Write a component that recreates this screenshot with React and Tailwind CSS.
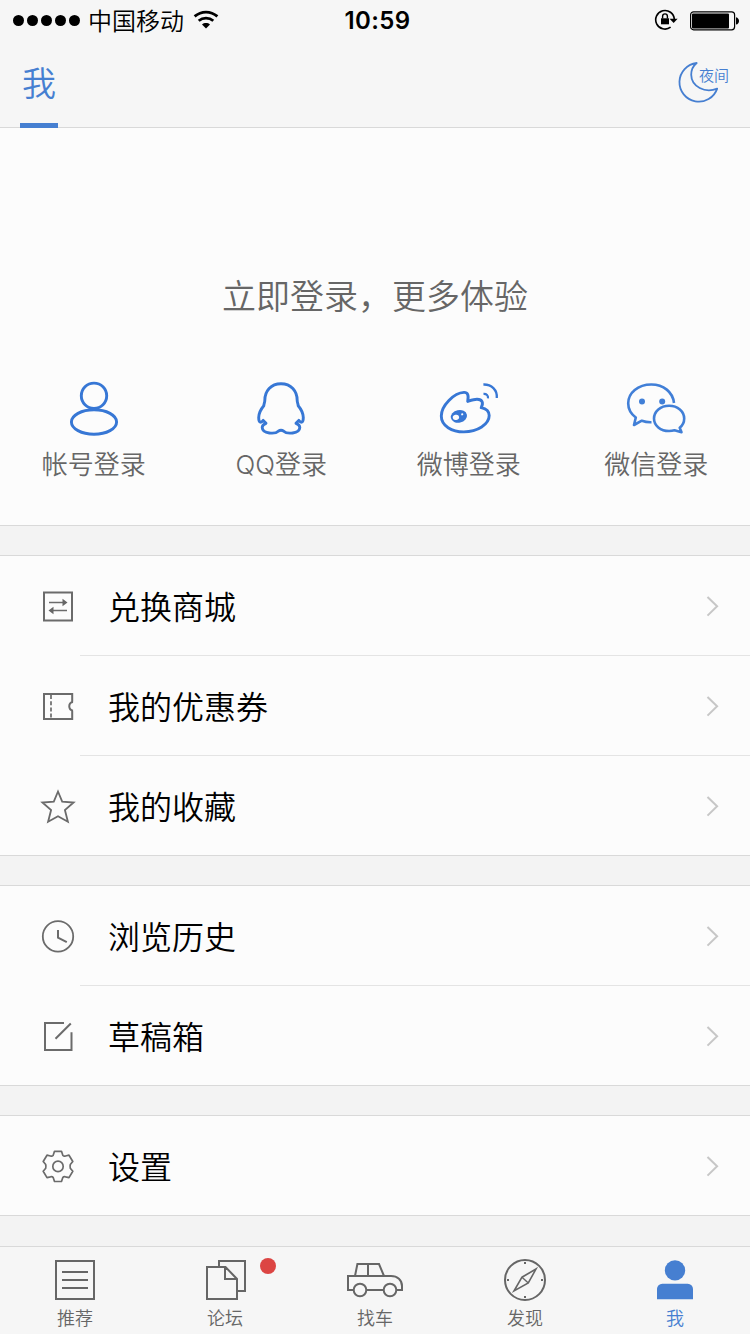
const StatusBar = () => (
  <div className="grid grid-cols-3 items-center h-10 text-black">
    <div className="flex items-center pl-[13px]">
      <div className="flex gap-[3px]">
        {[0, 1, 2, 3, 4].map((dot) => (
          <span key={dot} className="size-[11px] rounded-full bg-black" />
        ))}
      </div>
      <span className="ml-2 text-[24px] leading-10 whitespace-nowrap">中国移动</span>
      <svg className="ml-2 shrink-0" width="28" height="20" viewBox="0 0 28 20" fill="none" stroke="#000">
        <path d="M2.600 6.400C9.400 .6 18.600 .6 25.400 6.400" strokeWidth="2.800" />
        <path d="M6.700 10.800c4.300-3.700 10.300-3.700 14.600 0" strokeWidth="2.800" />
        <path d="M14 18.500l-4-4.100c2.300-1.900 5.700-1.900 8 0z" fill="#000" stroke="none" />
      </svg>
    </div>
    <div className="pt-0.5 pl-[5px] text-center font-['Inter'] text-[24px] font-semibold leading-[38px] tracking-[0.4px]">
      10:59
    </div>
    <div className="flex items-center justify-end pr-[11px] gap-3">
      <svg width="24" height="22" viewBox="0 0 24 22" fill="none" stroke="#000">
        <path d="M16.600 18.200A9.300 9.300 0 1 1 20.300 10.200" strokeWidth="1.600" />
        <path d="M15.600 9.800h8l-4 4.300z" fill="#000" stroke="none" />
        <rect x="7" y="9.300" width="8" height="6" fill="#000" stroke="none" />
        <path d="M8.600 9.500V7.300a2.400 2.400 0 0 1 4.800 0v2.200" strokeWidth="1.400" />
      </svg>
      <svg className="mt-px" width="49" height="20" viewBox="0 0 49 20">
        <rect x=".6" y=".8" width="44" height="18" rx="3" fill="none" stroke="#000" strokeWidth="1.200" />
        <rect x="2" y="2.400" width="37" height="15" rx="1" />
        <path d="M46 6.200c4 1 4 6.400 0 7.400z" />
      </svg>
    </div>
  </div>
);

const Header = () => (
  <header className="h-32 bg-[#f6f6f6] border-b border-[#d9d9d9]">
    <StatusBar />
    <div className="flex justify-between h-22">
      <div className="flex flex-col justify-between w-[38px] ml-5 text-[34px] text-center text-[#467fd1]">
        <span className="mt-[17px] leading-[50px]">我</span>
        <span className="h-[5px] bg-[#467fd1]" />
      </div>
      <button className="relative mt-5 mr-5 w-[54px] h-11 text-[#467fd1]">
        <svg width="54" height="44" viewBox="0 0 54 44" fill="none" stroke="currentColor" strokeWidth="1.800" strokeLinejoin="round">
          <path d="M20.700 3A19.400 19.400 0 1 0 41.200 28.600C29 33.600 15.400 26.600 15.200 14.800C15.200 10 17 6 20.700 3z" />
        </svg>
        <span className="absolute left-[23px] top-1 text-[15px] leading-[22px] whitespace-nowrap">夜间</span>
      </button>
    </div>
  </header>
);

const LoginIcon = ({ children }) => (
  <svg width="64" height="64" viewBox="0 0 64 64" fill="none" stroke="#3777d5" strokeWidth="2.900" strokeLinejoin="round">
    {children}
  </svg>
);

const logins = [
  {
    label: "帐号登录",
    icon: (
      <>
        <circle cx="32" cy="19.800" r="12.700" />
        <ellipse cx="32" cy="46" rx="22.600" ry="12.200" />
      </>
    ),
  },
  {
    label: "QQ登录",
    icon: (
      <path d="M32 7.800C22 7.800 15.800 15 15.800 24.500C15.800 26.500 14.900 27.500 14.800 29.700C11.300 33.800 9.800 37.500 9.700 41.500C9.700 46.500 11.800 47.600 14.200 44.400L17 47.300C14.500 48.300 13.200 49.500 13.200 51.500C13.500 58.300 26.500 58 29.300 55.200Q32 53.200 34.700 55.200C37.500 58 50.500 58.300 50.800 51.500C50.800 49.500 49.500 48.300 47 47.300L49.800 44.400C52.200 47.600 54.300 46.500 54.300 41.500C54.200 37.500 52.700 33.800 49.200 29.700C49.100 27.500 48.200 26.500 48.200 24.500C48.200 15 42 7.800 32 7.800z" />
    ),
  },
  {
    label: "微博登录",
    icon: (
      <>
        <path d="M30.700 25.400C32 18.500 30.500 16.300 27 16.400C17 16.800 4.300 29.500 4.300 40C4.300 50 15 55.900 26.800 55.900C40.500 55.900 52.200 48.300 52.200 39.600C52.200 35 48.800 32.700 44.200 31.700C46.800 27 45.300 23.200 40 23.200C37 23.200 34 24.300 30.700 25.400z" />
        <path d="M46.400 8.500C54.500 8.200 60.500 14 59.800 22" strokeWidth="2.300" />
        <path d="M46.500 17.800C49.500 17.600 51.400 19.500 51 22.400" strokeWidth="2.200" />
        <g stroke="none" transform="rotate(-12 21.900 40.400)">
          <ellipse cx="21.900" cy="40.400" rx="8.200" ry="6.300" fill="#3777d5" />
          <ellipse cx="18.800" cy="40.700" rx="3.200" ry="2.600" fill="#fcfcfc" />
          <circle cx="25.600" cy="39" r="1.100" fill="#fcfcfc" />
        </g>
      </>
    ),
  },
  {
    label: "微信登录",
    icon: (
      <g stroke="#417fd7" strokeWidth="2.600">
        <path d="M50 27C48.800 16 39.500 8.500 27.300 8.500C14 8.500 4.200 16.800 4.200 27.300C4.200 33.500 7 38 11.800 41.500L10 49L17.800 44.700Q22.500 46.400 27.500 46.200" />
        <path d="M45.100 29.700C36.500 29.700 30 35.300 30 42.500C30 49.600 36.500 55 45.100 55Q48 55 50.500 54.300L57.500 56.200L55.700 51.700C58.700 49.400 60.200 46.200 60.200 42.500C60.200 35.300 53.700 29.700 45.100 29.700z" />
        <circle cx="18" cy="25.400" r="3" fill="#417fd7" stroke="none" />
        <circle cx="38.200" cy="25.400" r="3" fill="#417fd7" stroke="none" />
      </g>
    ),
  },
];

const LoginPanel = () => (
  <section className="h-[398px] bg-[#fcfcfc] border-b border-[#d9d9d9] text-[#666]">
    <h1 className="pt-[142px] text-center text-[34px] leading-[50px] font-[350]">立即登录，更多体验</h1>
    <div className="grid grid-cols-4 mt-14">
      {logins.map(({ label, icon }) => (
        <button key={label} className="flex flex-col items-center">
          <LoginIcon>{icon}</LoginIcon>
          <span className="mt-[5px] font-['Inter','Noto_Sans_CJK_SC',sans-serif] text-[26px] leading-10 font-[350]">
            {label}
          </span>
        </button>
      ))}
    </div>
  </section>
);

const menus = [
  [
    {
      label: "兑换商城",
      icon: (
        <>
          <path d="M6 6.500h28v28H6z" />
          <path d="M11 16.500h14M29 24.500H15" strokeWidth="1.700" />
          <path d="M24.500 12.800l5 3.700-5 3.700zM15.500 20.800l-5 3.700 5 3.700z" fill="#666" stroke="none" />
        </>
      ),
    },
    {
      label: "我的优惠券",
      icon: (
        <>
          <path d="M34.200 15.800V8H6v25h28.200v-8.200M35 16a4.400 4.400 0 0 0 0 8.700" />
          <path d="M13 8v25" strokeDasharray="4 2.200" strokeDashoffset="-1" strokeWidth="1.700" />
        </>
      ),
    },
    {
      label: "我的收藏",
      icon: <path d="M20 5.500L24.200 15.600L35.600 16.500L26.900 24L29.900 35.700L20 30.200L10.100 35.700L13.100 24L4.400 16.500L15.800 15.600z" strokeWidth="1.800" />,
    },
  ],
  [
    {
      label: "浏览历史",
      icon: (
        <>
          <circle cx="20" cy="20.400" r="15.200" strokeWidth="1.800" />
          <path d="M20 14v7.700l8.800 4.500" />
        </>
      ),
    },
    {
      label: "草稿箱",
      icon: <path d="M26 7H7v27h26.500V16.300M17.500 22.800L32.800 7.500" />,
    },
  ],
  [
    {
      label: "设置",
      icon: (
        <g strokeWidth="1.700" strokeLinejoin="round">
          <path d="M16.500 5.300h7l1.400 4.200Q26 10.600 27.500 10L31 9.200L34.800 15.500L32.300 18.500Q31.800 20.400 32.300 22.300L34.800 25.300L31 31.600L27.500 30.800Q26 30.200 24.900 31.300L23.500 35.500h-7L15.100 31.300Q14 30.200 12.500 30.800L9 31.600L5.200 25.300L7.700 22.300Q8.200 20.400 7.700 18.500L5.200 15.500L9 9.200L12.500 10Q14 10.600 15.100 9.500z" />
          <circle cx="20" cy="20.400" r="5.200" />
        </g>
      ),
    },
  ],
];

const MenuRow = ({ label, icon, last }) => (
  <li className="relative flex items-center h-[100px] pl-[38px] pr-[30px]">
    <svg width="40" height="40" viewBox="0 0 40 40" fill="none" stroke="#6b6b6b" strokeWidth="2">
      {icon}
    </svg>
    <span className="flex-1 pl-[30px] pb-[3px] text-[32px] leading-[48px] text-black">{label}</span>
    <svg width="14" height="22" viewBox="0 0 14 22" fill="none" stroke="#c7c7c7" strokeWidth="2">
      <path d="M1.500 2l9.600 9.300-9.600 9.300" />
    </svg>
    {!last && <span className="absolute left-20 right-0 bottom-0 h-px bg-[#e4e4e4]" />}
  </li>
);

const MenuGroup = ({ items }) => (
  <ul className="mt-[29px] bg-[#fcfcfc] border-t border-[#d9d9d9]">
    {items.map((item, i) => (
      <MenuRow key={item.label} {...item} last={i === items.length - 1} />
    ))}
    <li className="-mt-px h-px bg-[#d9d9d9]" />
  </ul>
);

const tabs = [
  {
    label: "推荐",
    icon: <path d="M11 3h38v38H11zM17 14h26M17 22h26M17 30h26" />,
  },
  {
    label: "论坛",
    badge: true,
    icon: (
      <>
        <path d="M24 9V3h26v30h-8" />
        <path d="M30.500 9H12v32h30V21zM30 9v12h12" />
      </>
    ),
  },
  {
    label: "找车",
    icon: (
      <>
        <path d="M8.500 32H3V18h43c6.500 0 11 4 11 10v4h-5M21.500 32h17" />
        <path d="M10 18l2.400-12H34l5 12M23 6v12" />
        <circle cx="15" cy="32" r="6.300" />
        <circle cx="45" cy="32" r="6.300" />
      </>
    ),
  },
  {
    label: "发现",
    icon: (
      <>
        <circle cx="30" cy="22" r="20" />
        <path d="M41 11L27 19.200L19 33L33.300 25z" strokeWidth="1.600" />
        <path d="M27 19.200l6.300 5.800" strokeWidth="1.400" />
        <path d="M29 5h2M29 39h2M12 22h2M46 22h2" />
      </>
    ),
  },
  {
    label: "我",
    active: true,
    icon: (
      <g fill="currentColor" stroke="none">
        <circle cx="30" cy="12.400" r="10.200" />
        <path d="M12 41.300V31a5.300 5.300 0 0 1 5.300-5.300h25.400A5.300 5.300 0 0 1 48 31v10.300z" />
      </g>
    ),
  },
];

const TabBar = () => (
  <nav className="grid grid-cols-5 h-22 mt-[30px] bg-[#f6f6f6] border-t border-[#d9d9d9]">
    {tabs.map(({ label, icon, active, badge }) => (
      <button
        key={label}
        className={`relative flex flex-col items-center pt-[11px] ${active ? "text-[#467fd1]" : "text-[#666]"}`}
      >
        <svg width="60" height="44" viewBox="0 0 60 44" fill="none" stroke="currentColor" strokeWidth="2">
          {icon}
        </svg>
        <span className="mt-0.5 text-[18px] leading-[26px]">{label}</span>
        {badge && <span className="absolute left-[110px] top-[11px] size-4 rounded-full bg-[#dc4543]" />}
      </button>
    ))}
  </nav>
);

export default function App() {
  return (
    <div className="w-[750px] h-[1334px] overflow-hidden bg-[#f3f3f3] font-['Noto_Sans_CJK_SC',sans-serif] font-[350]">
      <Header />
      <LoginPanel />
      {menus.map((items) => (
        <MenuGroup key={items[0].label} items={items} />
      ))}
      <TabBar />
    </div>
  );
}
